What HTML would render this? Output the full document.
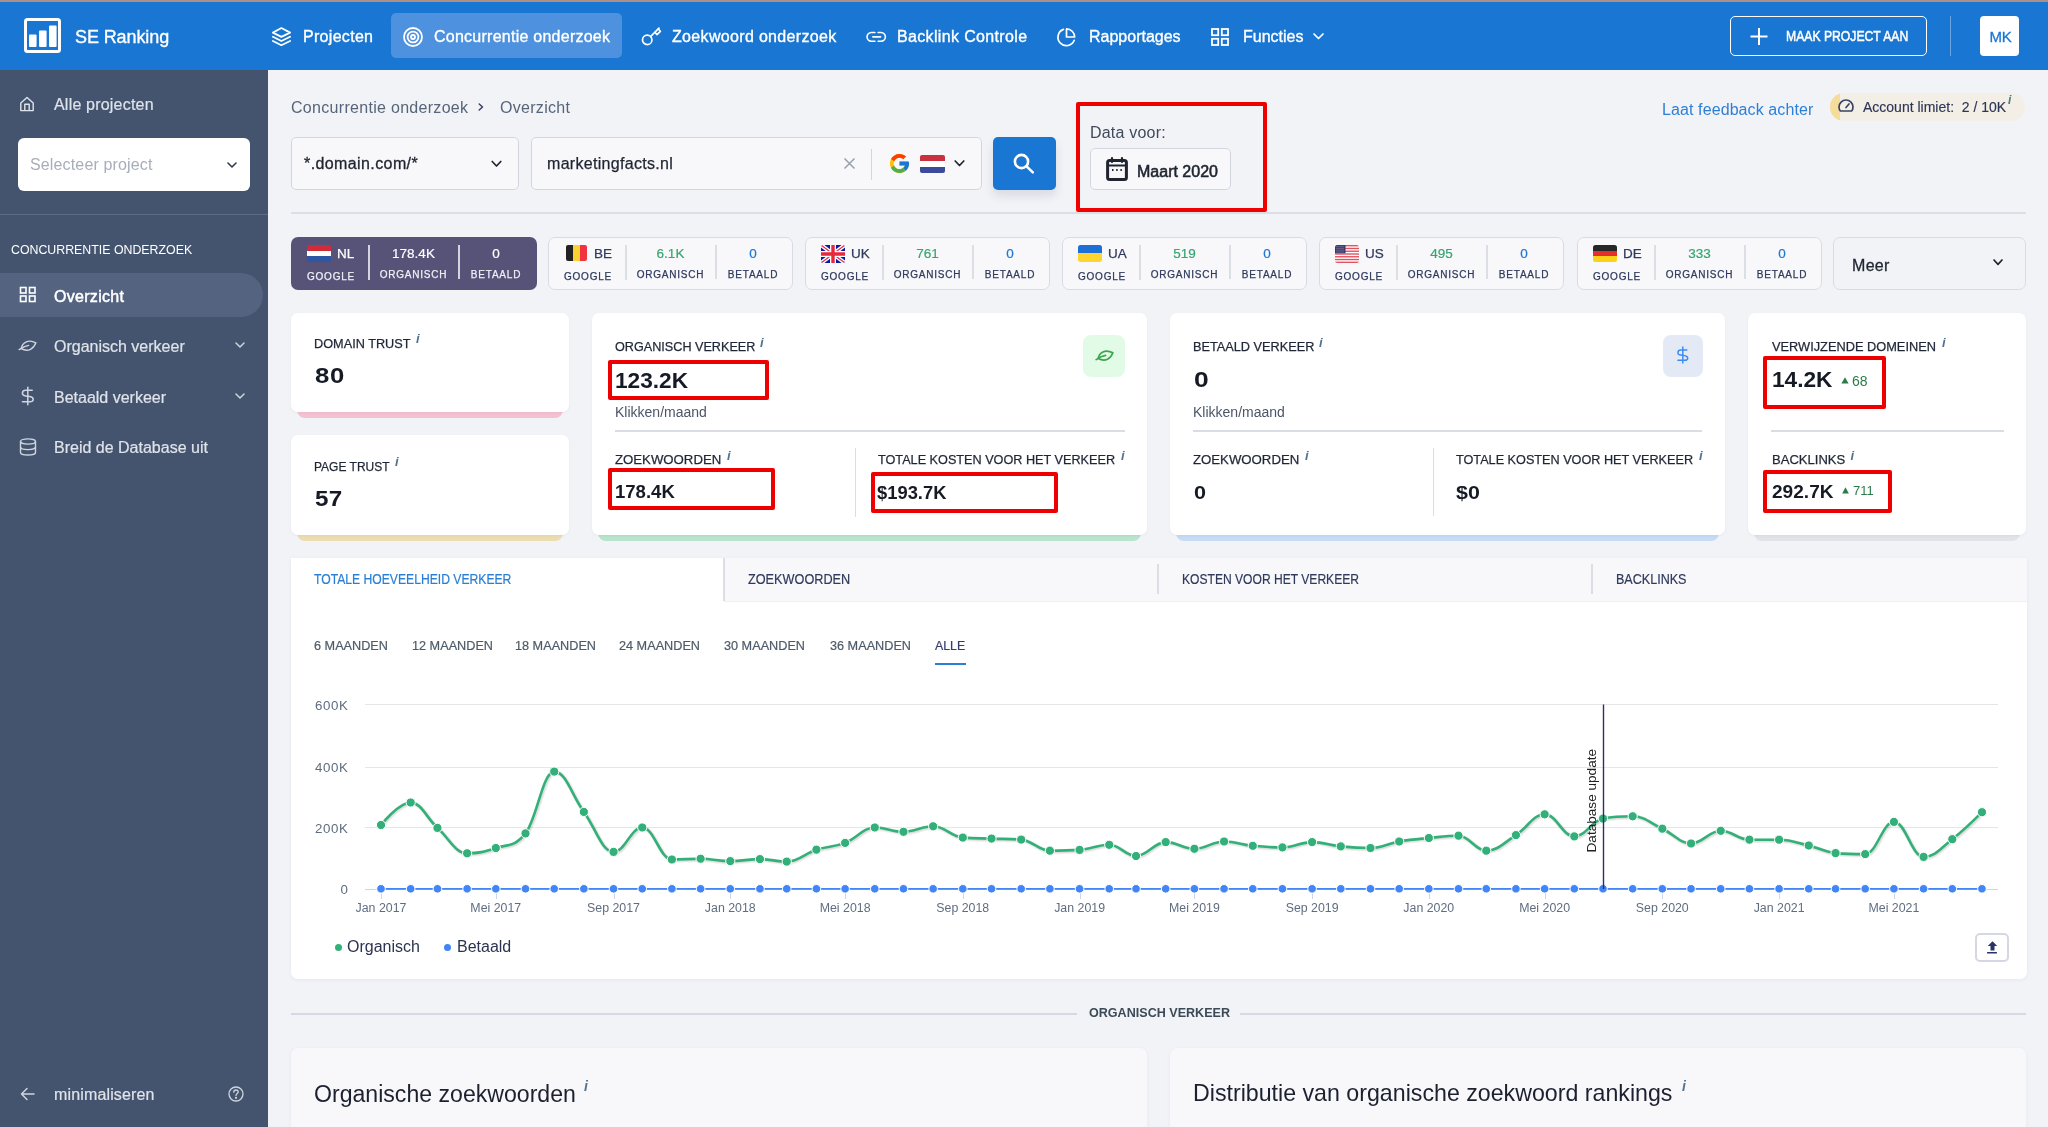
<!DOCTYPE html>
<html><head><meta charset="utf-8">
<style>
*{box-sizing:border-box;margin:0;padding:0}
html,body{width:2048px;height:1127px;overflow:hidden}
body{will-change:transform}
body{font-family:"Liberation Sans",sans-serif;background:#f2f3f7;position:relative;color:#1f2430}
.a{position:absolute}
.t{position:absolute;white-space:nowrap;line-height:1}
svg{position:absolute;overflow:visible}
/* top bar */
#topline{left:0;top:0;width:2048px;height:2px;background:#ae8f86;z-index:5}
#top{left:0;top:1px;width:2048px;height:69px;background:#1976d3}
.nav{color:#fff;font-size:16.4px;-webkit-text-stroke:0.35px #fff}
/* sidebar */
#side{left:0;top:70px;width:268px;height:1057px;background:#44546f}
.sd{color:#dfe3ea;font-size:16px;-webkit-text-stroke:0.2px #dfe3ea}
/* main */
.card{position:absolute;background:#fff;border-radius:6px}
</style></head>
<body>
<div id="topline" class="a"></div>
<div id="top" class="a">
  <!-- logo -->
  <svg style="left:24px;top:17px" width="38" height="36" viewBox="0 0 38 36">
    <rect x="1.5" y="1.5" width="34" height="32" rx="2" fill="none" stroke="#fff" stroke-width="3"/>
    <rect x="5" y="16.5" width="7.6" height="12.5" rx="1" fill="#fff"/>
    <rect x="15" y="12.5" width="7.6" height="16.5" rx="1" fill="#fff"/>
    <rect x="25" y="7.5" width="7.6" height="21.5" rx="1" fill="#fff"/>
  </svg>

  <div class="t nav" style="left:75px;top:27px;font-size:18px;font-weight:400;letter-spacing:-0.1px">SE Ranking</div>
  <!-- Projecten layers icon -->
  <svg style="left:271px;top:25px" width="22" height="22" viewBox="0 0 22 22" fill="none" stroke="#fff" stroke-width="1.8" stroke-linejoin="round" stroke-linecap="round">
    <path d="M10.4 2.05 L19.1 6.6 L10.4 10.9 L1.9 6.6 Z"/>
    <path d="M1.9 10.8 L10.4 15 L19.1 10.8"/>
    <path d="M1.9 15 L10.4 19.2 L19.1 15"/>
  </svg>
  <div class="t nav" style="left:303px;top:28px;font-size:16px;letter-spacing:0.3px">Projecten</div>
  <div class="a" style="left:391px;top:12px;width:231px;height:45px;background:#4e91de;border-radius:5px"></div>
  <svg style="left:402px;top:25px" width="22" height="22" viewBox="0 0 22 22" fill="none" stroke="#fff" stroke-width="1.8">
    <circle cx="11" cy="11" r="9"/><circle cx="11" cy="11" r="5.4"/><circle cx="11" cy="11" r="2"/>
  </svg>
  <div class="t nav" style="left:434px;top:28px;font-size:16px;letter-spacing:0.25px">Concurrentie onderzoek</div>
  <!-- key -->
  <svg style="left:636px;top:20px" width="30" height="30" viewBox="0 0 30 30" fill="none" stroke="#fff" stroke-width="1.7" stroke-linecap="round" stroke-linejoin="round">
    <circle cx="11.2" cy="18.9" r="4.7"/>
    <path d="M14.6 15.5 L23 7.2"/><path d="M18.9 11.3 L21 13.6 L24.4 10.3 L22.3 8"/>
  </svg>
  <div class="t nav" style="left:672px;top:28px;font-size:16px;letter-spacing:0.33px">Zoekwoord onderzoek</div>
  <!-- link -->
  <svg style="left:864px;top:28px" width="24" height="16" viewBox="0 0 24 16" fill="none" stroke="#fff" stroke-width="1.6" stroke-linecap="round">
    <path d="M10.9 3.5 H7.35 A4.35 4.35 0 0 0 7.35 12.2 H10.9"/>
    <path d="M14.1 3.5 H17.05 A4.35 4.35 0 0 1 17.05 12.2 H14.1"/>
    <path d="M8.8 7.85 H16.6"/>
  </svg>
  <div class="t nav" style="left:897px;top:28px;font-size:16px;letter-spacing:0.35px">Backlink Controle</div>
  <!-- pie -->
  <svg style="left:1056px;top:26px" width="20" height="20" viewBox="0 0 20 20" fill="none" stroke="#fff" stroke-width="1.7" stroke-linejoin="round" stroke-linecap="round">
    <path d="M7.4 2.4 A8.4 8.4 0 1 0 18.2 13.3"/>
    <path d="M10.5 1.9 V10 H18.6 A8.1 8.1 0 0 0 10.5 1.9 Z"/>
  </svg>
  <div class="t nav" style="left:1089px;top:28px;font-size:16px">Rapportages</div>
  <!-- grid -->
  <svg style="left:1211px;top:26.5px" width="18" height="18" viewBox="0 0 18 18" fill="none" stroke="#fff" stroke-width="1.8">
    <rect x="1" y="1" width="6.2" height="6.2"/><rect x="10.8" y="1" width="6.2" height="6.2"/>
    <rect x="1" y="10.8" width="6.2" height="6.2"/><rect x="10.8" y="10.8" width="6.2" height="6.2"/>
  </svg>
  <div class="t nav" style="left:1243px;top:28px;font-size:16px">Functies</div>
  <svg style="left:1313px;top:32px" width="11" height="7" viewBox="0 0 11 7" fill="none" stroke="#fff" stroke-width="1.7" stroke-linecap="round" stroke-linejoin="round"><path d="M1 1 L5.5 5.5 L10 1"/></svg>
  <!-- button -->
  <div class="a" style="left:1730px;top:15px;width:197px;height:40px;border:1.5px solid #fff;border-radius:5px"></div>
  <svg style="left:1750px;top:27px" width="18" height="17" viewBox="0 0 18 17" stroke="#fff" stroke-width="2"><path d="M9 0 V17 M0.5 8.5 H17.5"/></svg>
  <div class="t nav" style="left:1786px;top:28px;font-size:14.5px;font-weight:400;-webkit-text-stroke:0.5px #fff;transform:scaleX(0.84);transform-origin:0 0;letter-spacing:0px">MAAK PROJECT AAN</div>
  <div class="a" style="left:1950px;top:15px;width:1px;height:40px;background:rgba(255,255,255,0.35)"></div>
  <div class="a" style="left:1980px;top:15px;width:39px;height:40px;background:#fff;border-radius:4px"></div>
  <div class="t" style="left:1989.5px;top:27.5px;font-size:15px;color:#1976d3;letter-spacing:-0.3px;-webkit-text-stroke:0.3px #1976d3">MK</div>
</div>

<div id="side" class="a">
  <svg style="left:19px;top:26px" width="16" height="16" viewBox="0 0 16 16" fill="none" stroke="#dfe3ea" stroke-width="1.4" stroke-linejoin="round">
    <path d="M1.8 14.6 V7 L8 1.5 L14.2 7 V14.6 Z"/><path d="M5.8 14.6 V8.2 H10.2 V14.6"/>
  </svg>
  <div class="t sd" style="left:54px;top:27px;letter-spacing:0.2px">Alle projecten</div>
  <div class="a" style="left:18px;top:68px;width:232px;height:53px;background:#fff;border-radius:6px"></div>
  <div class="t" style="left:30px;top:87px;font-size:16px;color:#a7adb9;letter-spacing:0.15px">Selecteer project</div>
  <svg style="left:227px;top:92px" width="10" height="7" viewBox="0 0 10 7" fill="none" stroke="#2f3a4c" stroke-width="1.6" stroke-linecap="round" stroke-linejoin="round"><path d="M1 1 L5 5 L9 1"/></svg>
  <div class="a" style="left:0;top:144px;width:268px;height:1px;background:#5e6d86"></div>
  <div class="t" style="left:11px;top:173px;font-size:13px;color:#fff;transform:scaleX(0.95);transform-origin:0 0">CONCURRENTIE ONDERZOEK</div>
  <div class="a" style="left:0;top:203px;width:263px;height:44px;background:#536380;border-radius:0 22px 22px 0"></div>
  <svg style="left:19px;top:216px" width="18" height="17" viewBox="0 0 18 17" fill="none" stroke="#fff" stroke-width="1.6">
    <rect x="1.5" y="1.5" width="5.5" height="5.5"/><rect x="10.5" y="1.5" width="5.5" height="5.5"/>
    <rect x="1.5" y="10" width="5.5" height="5.5"/><rect x="10.5" y="10" width="5.5" height="5.5"/>
  </svg>
  <div class="t" style="left:54px;top:219px;font-size:16px;color:#fff;font-weight:400;-webkit-text-stroke:0.5px #fff;letter-spacing:0.3px">Overzicht</div>
  <svg style="left:14px;top:264px" width="28" height="22" viewBox="0 0 28 22" fill="none" stroke="#cfd5de" stroke-width="1.4" stroke-linecap="round" stroke-linejoin="round">
    <path d="M7.2 14.6 C8.2 8.8 13.8 4.8 21.9 8.8 C19.8 14.3 14.6 18.6 7.2 14.6 Z"/><path d="M5.1 15.6 C8 13.6 11 12 14.6 11.4"/>
  </svg>
  <div class="t sd" style="left:54px;top:269px">Organisch verkeer</div>
  <svg style="left:235px;top:272px" width="10" height="7" viewBox="0 0 10 7" fill="none" stroke="#cfd5de" stroke-width="1.5" stroke-linecap="round" stroke-linejoin="round"><path d="M1 1 L5 5 L9 1"/></svg>
  <svg style="left:14px;top:316px" width="28" height="22" viewBox="0 0 28 22" fill="none" stroke="#cfd5de" stroke-width="1.5" stroke-linecap="round">
    <path d="M18.2 4.3 H11.6 C9.6 4.3 8.4 5.7 8.4 7.3 C8.4 9 9.6 9.7 11.6 10 L15.8 10.6 C17.9 10.9 19.2 12 19.2 13.4 C19.2 15 17.8 15.7 15.8 15.7 H8.4"/><path d="M13.8 1.2 V18.8"/>
  </svg>
  <div class="t sd" style="left:54px;top:320px">Betaald verkeer</div>
  <svg style="left:235px;top:323px" width="10" height="7" viewBox="0 0 10 7" fill="none" stroke="#cfd5de" stroke-width="1.5" stroke-linecap="round" stroke-linejoin="round"><path d="M1 1 L5 5 L9 1"/></svg>
  <svg style="left:19px;top:368px" width="18" height="18" viewBox="0 0 18 18" fill="none" stroke="#cfd5de" stroke-width="1.4">
    <ellipse cx="9" cy="3.5" rx="7.5" ry="2.6"/><path d="M1.5 3.5 V14.5 C1.5 16 5 17 9 17 C13 17 16.5 16 16.5 14.5 V3.5"/><path d="M1.5 9 C1.5 10.5 5 11.6 9 11.6 C13 11.6 16.5 10.5 16.5 9"/>
  </svg>
  <div class="t sd" style="left:54px;top:370px">Breid de Database uit</div>
  <svg style="left:20px;top:1017px" width="15" height="14" viewBox="0 0 15 14" fill="none" stroke="#cfd5de" stroke-width="1.5" stroke-linecap="round" stroke-linejoin="round"><path d="M14 7 H1.5 M7 1.5 L1.5 7 L7 12.5"/></svg>
  <div class="t sd" style="left:54px;top:1017px;letter-spacing:0.15px">minimaliseren</div>
  <svg style="left:228px;top:1016px" width="16" height="16" viewBox="0 0 16 16" fill="none" stroke="#cfd5de" stroke-width="1.3"><circle cx="8" cy="8" r="7"/><path d="M5.8 6.2 C5.8 4.8 6.8 4 8 4 C9.3 4 10.2 4.8 10.2 6 C10.2 7.6 8 7.6 8 9.6" stroke-linecap="round"/><circle cx="8" cy="11.8" r="0.5" fill="#cfd5de"/></svg>
</div>

<!-- MAIN -->
<div class="t" style="left:291px;top:100px;font-size:16px;color:#56657a;letter-spacing:0.3px">Concurrentie onderzoek</div>
<svg style="left:478px;top:102.5px" width="6" height="8" viewBox="0 0 6 8" fill="none" stroke="#3a3f6e" stroke-width="1.5" stroke-linecap="round" stroke-linejoin="round"><path d="M1.2 1 L4.5 4 L1.2 7"/></svg>
<div class="t" style="left:500px;top:100px;font-size:16px;color:#56657a;letter-spacing:0.3px">Overzicht</div>

<div class="a" style="left:291px;top:137px;width:228px;height:53px;background:#f8f8fb;border:1px solid #d3d6de;border-radius:5px"></div>
<div class="t" style="left:304px;top:156px;font-size:16px;color:#1f2430;letter-spacing:0.4px;-webkit-text-stroke:0.3px #1f2430">*.domain.com/*</div>
<svg style="left:491px;top:160px" width="11" height="8" viewBox="0 0 11 8" fill="none" stroke="#1f2430" stroke-width="1.7" stroke-linecap="round" stroke-linejoin="round"><path d="M1.2 1.5 L5.5 6 L9.8 1.5"/></svg>

<div class="a" style="left:531px;top:137px;width:451px;height:53px;background:#f8f8fb;border:1px solid #d3d6de;border-radius:5px"></div>
<div class="t" style="left:547px;top:156px;font-size:16px;color:#1f2430;letter-spacing:0.3px;-webkit-text-stroke:0.25px #1f2430">marketingfacts.nl</div>
<svg style="left:843px;top:158px" width="13" height="11" viewBox="0 0 13 11" fill="none" stroke="#9aa0ab" stroke-width="1.5"><path d="M1.5 0.5 L11.5 10.5 M11.5 0.5 L1.5 10.5"/></svg>
<div class="a" style="left:871px;top:149px;width:1px;height:31px;background:#d3d6de"></div>
<svg style="left:888px;top:152px" width="23" height="23" viewBox="0 0 48 48">
 <path fill="#FFC107" d="M43.6 20.1H42V20H24v8h11.3C33.7 32.7 29.2 36 24 36c-6.6 0-12-5.4-12-12s5.4-12 12-12c3.1 0 5.8 1.2 7.9 3.1l5.7-5.7C34 6.1 29.3 4 24 4 13 4 4 13 4 24s9 20 20 20 20-9 20-20c0-1.3-.1-2.6-.4-3.9z"/>
 <path fill="#FF3D00" d="M6.3 14.7l6.6 4.8C14.7 15.1 19 12 24 12c3.1 0 5.8 1.2 7.9 3.1l5.7-5.7C34 6.1 29.3 4 24 4 16.3 4 9.7 8.3 6.3 14.7z"/>
 <path fill="#4CAF50" d="M24 44c5.2 0 9.9-2 13.4-5.2l-6.2-5.2C29.2 35.1 26.7 36 24 36c-5.2 0-9.6-3.3-11.3-7.9l-6.5 5C9.5 39.6 16.2 44 24 44z"/>
 <path fill="#1976D2" d="M43.6 20.1H42V20H24v8h11.3c-.8 2.2-2.2 4.2-4.1 5.6l6.2 5.2C37 39.2 44 34 44 24c0-1.3-.1-2.6-.4-3.9z"/>
</svg>
<div class="a" style="left:920px;top:155px;width:25px;height:18px;border-radius:2px;overflow:hidden;background:linear-gradient(#c8313e 0 33.3%,#fff 33.3% 66.6%,#3b4b9b 66.6%)"></div>
<svg style="left:954px;top:160px" width="11" height="7" viewBox="0 0 11 7" fill="none" stroke="#1f2430" stroke-width="1.7" stroke-linecap="round" stroke-linejoin="round"><path d="M1.2 1 L5.5 5.5 L9.8 1"/></svg>

<div class="a" style="left:993px;top:137px;width:63px;height:53px;background:#1976d3;border-radius:5px;box-shadow:0 6px 10px rgba(30,50,90,0.12)"></div>
<svg style="left:1013px;top:153px" width="23" height="21" viewBox="0 0 23 21" fill="none" stroke="#fff" stroke-width="2.6" stroke-linecap="round"><circle cx="8.5" cy="8.5" r="6.6"/><path d="M13.6 13.4 L19.8 19.4"/></svg>

<div class="a" style="left:1076px;top:102px;width:191px;height:110px;border:4px solid #ee0000;border-radius:2px"></div>
<div class="t" style="left:1090px;top:124.5px;font-size:16px;color:#404a5c;letter-spacing:0.2px">Data voor:</div>
<div class="a" style="left:1090px;top:148px;width:141px;height:42px;background:#f8f8fb;border:1px solid #d3d6de;border-radius:5px"></div>
<svg style="left:1106px;top:157px" width="22" height="24" viewBox="0 0 22 24" fill="none" stroke="#1f2430">
 <rect x="1.6" y="3.6" width="18.8" height="18.8" rx="2" stroke-width="3"/>
 <path d="M1.6 8.5 H20.4" stroke-width="2"/>
 <path d="M6 1 V5 M16 1 V5" stroke-width="2.2" stroke-linecap="round"/>
 <path d="M6 13 H7.5 M10.2 13 H11.7 M14.4 13 H15.9" stroke-width="1.8"/>
</svg>
<div class="t" style="left:1137px;top:163.5px;font-size:16px;color:#1f2430;font-weight:400;-webkit-text-stroke:0.55px #1f2430;letter-spacing:0px">Maart 2020</div>

<div class="t" style="left:1662px;top:101.5px;font-size:16px;color:#2d7fd6;letter-spacing:0.1px">Laat feedback achter</div>
<div class="a" style="left:1830px;top:93px;width:195px;height:28px;background:#f4efe6;border-radius:14px;overflow:hidden"><div class="a" style="left:0;top:0;width:10px;height:28px;background:#f6dc9b"></div></div>
<svg style="left:1838px;top:98px" width="16" height="15" viewBox="0 0 16 15" fill="none" stroke="#3a4462" stroke-width="1.7" stroke-linecap="round"><path d="M2.4 13 H13.6 C14.6 11.9 15 10.4 15 9 A7 7 0 0 0 1 9 C1 10.4 1.4 11.9 2.4 13 Z"/><path d="M8 9.5 L11 6"/></svg>
<div class="t" style="left:1863px;top:100px;font-size:14px;color:#2d3659;-webkit-text-stroke:0.15px #2d3659;transform:scaleX(1.0);transform-origin:0 0">Account limiet:&nbsp; 2 / 10K</div>
<div class="t" style="left:2008px;top:94px;font-size:12px;font-weight:700;color:#4f7a8f;font-style:italic">i</div>

<div class="a" style="left:291px;top:212px;width:1735px;height:2px;background:#dcdee6"></div>

<div class="a" style="left:291px;top:237px;width:246px;height:53px;background:#575278;border-radius:7px"></div>
<div class="a" style="left:307px;top:245px;width:24px;height:17px;border-radius:2.5px;overflow:hidden;background:linear-gradient(#cf2b38 0 34%,#fff 34% 66%,#2d56a3 66%)"></div>
<div class="t" style="left:337px;top:246.5px;font-size:13.5px;color:#fff;-webkit-text-stroke:0.25px #fff">NL</div>
<div class="t" style="left:306px;width:50px;text-align:center;top:271.5px;font-size:10px;letter-spacing:0.8px;color:#f0eff5;-webkit-text-stroke:0.25px #f0eff5">GOOGLE</div>
<div class="a" style="left:368px;top:245px;width:1.5px;height:35px;background:rgba(255,255,255,0.75)"></div>
<div class="t" style="left:373.5px;width:80px;text-align:center;top:246.5px;font-size:13.5px;color:#fff;-webkit-text-stroke:0.2px #fff">178.4K</div>
<div class="t" style="left:373.5px;width:80px;text-align:center;top:270px;font-size:10px;letter-spacing:0.75px;color:#f0eff5;-webkit-text-stroke:0.25px #f0eff5">ORGANISCH</div>
<div class="a" style="left:458px;top:245px;width:1.5px;height:34px;background:rgba(255,255,255,0.75)"></div>
<div class="t" style="left:456px;width:80px;text-align:center;top:246.5px;font-size:13.5px;color:#fff;-webkit-text-stroke:0.2px #fff">0</div>
<div class="t" style="left:456px;width:80px;text-align:center;top:270px;font-size:10px;letter-spacing:0.8px;color:#f0eff5;-webkit-text-stroke:0.25px #f0eff5">BETAALD</div>
<div class="a" style="left:548px;top:237px;width:245px;height:53px;background:#f8f8fb;border:1.5px solid #d9dbe4;border-radius:7px"></div>
<div class="a" style="left:566px;top:245px;width:21px;height:16px;border-radius:2px;overflow:hidden;background:linear-gradient(90deg,#222 0 33.3%,#fbd033 33.3% 66.6%,#f0333f 66.6%)"></div>
<div class="t" style="left:594px;top:246.5px;font-size:13.5px;color:#2f3a5c;-webkit-text-stroke:0.25px #2f3a5c">BE</div>
<div class="t" style="left:563px;width:50px;text-align:center;top:271.5px;font-size:10px;letter-spacing:0.8px;color:#2f3a5c;-webkit-text-stroke:0.25px #2f3a5c">GOOGLE</div>
<div class="a" style="left:625px;top:245px;width:1.5px;height:35px;background:#dcdee6"></div>
<div class="t" style="left:630.5px;width:80px;text-align:center;top:246.5px;font-size:13.5px;color:#35a66f;-webkit-text-stroke:0.2px #35a66f">6.1K</div>
<div class="t" style="left:630.5px;width:80px;text-align:center;top:270px;font-size:10px;letter-spacing:0.75px;color:#2f3a5c;-webkit-text-stroke:0.25px #2f3a5c">ORGANISCH</div>
<div class="a" style="left:715px;top:245px;width:1.5px;height:34px;background:#dcdee6"></div>
<div class="t" style="left:713px;width:80px;text-align:center;top:246.5px;font-size:13.5px;color:#1f78d1;-webkit-text-stroke:0.2px #1f78d1">0</div>
<div class="t" style="left:713px;width:80px;text-align:center;top:270px;font-size:10px;letter-spacing:0.8px;color:#2f3a5c;-webkit-text-stroke:0.25px #2f3a5c">BETAALD</div>
<div class="a" style="left:805px;top:237px;width:245px;height:53px;background:#f8f8fb;border:1.5px solid #d9dbe4;border-radius:7px"></div>
<svg style="left:821px;top:245px" width="24" height="18" viewBox="0 0 24 18"><defs><clipPath id="ukc"><rect width="24" height="18" rx="2.5"/></clipPath></defs><g clip-path="url(#ukc)"><rect width="24" height="18" fill="#0a17a7"/><path d="M0 0 L24 18 M24 0 L0 18" stroke="#fff" stroke-width="4"/><path d="M0 0 L24 18 M24 0 L0 18" stroke="#e6273e" stroke-width="1.2"/><path d="M12 0 V18 M0 9 H24" stroke="#fff" stroke-width="6"/><path d="M12 0 V18 M0 9 H24" stroke="#e6273e" stroke-width="3.4"/></g></svg>
<div class="t" style="left:851px;top:246.5px;font-size:13.5px;color:#2f3a5c;-webkit-text-stroke:0.25px #2f3a5c">UK</div>
<div class="t" style="left:820px;width:50px;text-align:center;top:271.5px;font-size:10px;letter-spacing:0.8px;color:#2f3a5c;-webkit-text-stroke:0.25px #2f3a5c">GOOGLE</div>
<div class="a" style="left:882px;top:245px;width:1.5px;height:35px;background:#dcdee6"></div>
<div class="t" style="left:887.5px;width:80px;text-align:center;top:246.5px;font-size:13.5px;color:#35a66f;-webkit-text-stroke:0.2px #35a66f">761</div>
<div class="t" style="left:887.5px;width:80px;text-align:center;top:270px;font-size:10px;letter-spacing:0.75px;color:#2f3a5c;-webkit-text-stroke:0.25px #2f3a5c">ORGANISCH</div>
<div class="a" style="left:972px;top:245px;width:1.5px;height:34px;background:#dcdee6"></div>
<div class="t" style="left:970px;width:80px;text-align:center;top:246.5px;font-size:13.5px;color:#1f78d1;-webkit-text-stroke:0.2px #1f78d1">0</div>
<div class="t" style="left:970px;width:80px;text-align:center;top:270px;font-size:10px;letter-spacing:0.8px;color:#2f3a5c;-webkit-text-stroke:0.25px #2f3a5c">BETAALD</div>
<div class="a" style="left:1062px;top:237px;width:245px;height:53px;background:#f8f8fb;border:1.5px solid #d9dbe4;border-radius:7px"></div>
<div class="a" style="left:1078px;top:245px;width:24px;height:17px;border-radius:2.5px;overflow:hidden;background:linear-gradient(#1d6fd6 0 50%,#fed530 50%)"></div>
<div class="t" style="left:1108px;top:246.5px;font-size:13.5px;color:#2f3a5c;-webkit-text-stroke:0.25px #2f3a5c">UA</div>
<div class="t" style="left:1077px;width:50px;text-align:center;top:271.5px;font-size:10px;letter-spacing:0.8px;color:#2f3a5c;-webkit-text-stroke:0.25px #2f3a5c">GOOGLE</div>
<div class="a" style="left:1139px;top:245px;width:1.5px;height:35px;background:#dcdee6"></div>
<div class="t" style="left:1144.5px;width:80px;text-align:center;top:246.5px;font-size:13.5px;color:#35a66f;-webkit-text-stroke:0.2px #35a66f">519</div>
<div class="t" style="left:1144.5px;width:80px;text-align:center;top:270px;font-size:10px;letter-spacing:0.75px;color:#2f3a5c;-webkit-text-stroke:0.25px #2f3a5c">ORGANISCH</div>
<div class="a" style="left:1229px;top:245px;width:1.5px;height:34px;background:#dcdee6"></div>
<div class="t" style="left:1227px;width:80px;text-align:center;top:246.5px;font-size:13.5px;color:#1f78d1;-webkit-text-stroke:0.2px #1f78d1">0</div>
<div class="t" style="left:1227px;width:80px;text-align:center;top:270px;font-size:10px;letter-spacing:0.8px;color:#2f3a5c;-webkit-text-stroke:0.25px #2f3a5c">BETAALD</div>
<div class="a" style="left:1319px;top:237px;width:245px;height:53px;background:#f8f8fb;border:1.5px solid #d9dbe4;border-radius:7px"></div>
<svg style="left:1335px;top:245px" width="24" height="18" viewBox="0 0 24 18"><defs><clipPath id="usc"><rect width="24" height="18" rx="2.5"/></clipPath></defs><g clip-path="url(#usc)"><rect width="24" height="18" fill="#fff"/><rect y="0.00" width="24" height="1.38" fill="#e0525f"/><rect y="2.77" width="24" height="1.38" fill="#e0525f"/><rect y="5.54" width="24" height="1.38" fill="#e0525f"/><rect y="8.31" width="24" height="1.38" fill="#e0525f"/><rect y="11.08" width="24" height="1.38" fill="#e0525f"/><rect y="13.85" width="24" height="1.38" fill="#e0525f"/><rect y="16.62" width="24" height="1.38" fill="#e0525f"/><rect width="10.5" height="8.3" fill="#3c3b6e"/><path d="M1.5 1.6h7.5M1.5 3.4h7.5M1.5 5.2h7.5M1.5 7h7.5" stroke="#aab" stroke-width="0.7" stroke-dasharray="1 1"/></g></svg>
<div class="t" style="left:1365px;top:246.5px;font-size:13.5px;color:#2f3a5c;-webkit-text-stroke:0.25px #2f3a5c">US</div>
<div class="t" style="left:1334px;width:50px;text-align:center;top:271.5px;font-size:10px;letter-spacing:0.8px;color:#2f3a5c;-webkit-text-stroke:0.25px #2f3a5c">GOOGLE</div>
<div class="a" style="left:1396px;top:245px;width:1.5px;height:35px;background:#dcdee6"></div>
<div class="t" style="left:1401.5px;width:80px;text-align:center;top:246.5px;font-size:13.5px;color:#35a66f;-webkit-text-stroke:0.2px #35a66f">495</div>
<div class="t" style="left:1401.5px;width:80px;text-align:center;top:270px;font-size:10px;letter-spacing:0.75px;color:#2f3a5c;-webkit-text-stroke:0.25px #2f3a5c">ORGANISCH</div>
<div class="a" style="left:1486px;top:245px;width:1.5px;height:34px;background:#dcdee6"></div>
<div class="t" style="left:1484px;width:80px;text-align:center;top:246.5px;font-size:13.5px;color:#1f78d1;-webkit-text-stroke:0.2px #1f78d1">0</div>
<div class="t" style="left:1484px;width:80px;text-align:center;top:270px;font-size:10px;letter-spacing:0.8px;color:#2f3a5c;-webkit-text-stroke:0.25px #2f3a5c">BETAALD</div>
<div class="a" style="left:1577px;top:237px;width:245px;height:53px;background:#f8f8fb;border:1.5px solid #d9dbe4;border-radius:7px"></div>
<div class="a" style="left:1593px;top:245px;width:24px;height:17px;border-radius:2.5px;overflow:hidden;background:linear-gradient(#272727 0 33.3%,#e42f2f 33.3% 66.6%,#fcd118 66.6%)"></div>
<div class="t" style="left:1623px;top:246.5px;font-size:13.5px;color:#2f3a5c;-webkit-text-stroke:0.25px #2f3a5c">DE</div>
<div class="t" style="left:1592px;width:50px;text-align:center;top:271.5px;font-size:10px;letter-spacing:0.8px;color:#2f3a5c;-webkit-text-stroke:0.25px #2f3a5c">GOOGLE</div>
<div class="a" style="left:1654px;top:245px;width:1.5px;height:35px;background:#dcdee6"></div>
<div class="t" style="left:1659.5px;width:80px;text-align:center;top:246.5px;font-size:13.5px;color:#35a66f;-webkit-text-stroke:0.2px #35a66f">333</div>
<div class="t" style="left:1659.5px;width:80px;text-align:center;top:270px;font-size:10px;letter-spacing:0.75px;color:#2f3a5c;-webkit-text-stroke:0.25px #2f3a5c">ORGANISCH</div>
<div class="a" style="left:1744px;top:245px;width:1.5px;height:34px;background:#dcdee6"></div>
<div class="t" style="left:1742px;width:80px;text-align:center;top:246.5px;font-size:13.5px;color:#1f78d1;-webkit-text-stroke:0.2px #1f78d1">0</div>
<div class="t" style="left:1742px;width:80px;text-align:center;top:270px;font-size:10px;letter-spacing:0.8px;color:#2f3a5c;-webkit-text-stroke:0.25px #2f3a5c">BETAALD</div>
<div class="a" style="left:1833px;top:237px;width:193px;height:53px;border:1.5px solid #d9dbe4;border-radius:7px"></div>
<div class="t" style="left:1852px;top:257.5px;font-size:16px;color:#1f2430;letter-spacing:0.3px;-webkit-text-stroke:0.3px #1f2430">Meer</div>
<svg style="left:1993px;top:259px" width="10" height="7" viewBox="0 0 10 7" fill="none" stroke="#1f2430" stroke-width="1.7" stroke-linecap="round" stroke-linejoin="round"><path d="M1 1 L5 5.3 L9 1"/></svg><div class="a" style="left:297px;top:402px;width:266px;height:16px;background:#f4c1d1;border-radius:0 0 8px 8px"></div>
<div class="a" style="left:291px;top:313px;width:278px;height:99px;background:#fff;border-radius:7px;box-shadow:0 1px 3px rgba(40,50,80,0.05)"></div>
<div class="t" style="left:314px;top:337.1px;font-size:13.2px;color:#1f2636;-webkit-text-stroke:0.25px #1f2636;transform:scaleX(0.964);transform-origin:0 0">DOMAIN TRUST</div>
<div class="t" style="left:416px;top:332px;font-size:13px;font-weight:700;color:#52738f;font-style:italic">i</div>
<div class="t" style="left:314.5px;top:364.8px;font-size:22px;font-weight:700;color:#151a24;letter-spacing:0.6px;transform:scaleX(1.17);transform-origin:0 0">80</div>
<div class="a" style="left:297px;top:525px;width:266px;height:16px;background:#ecdcb0;border-radius:0 0 8px 8px"></div>
<div class="a" style="left:291px;top:435px;width:278px;height:100px;background:#fff;border-radius:7px;box-shadow:0 1px 3px rgba(40,50,80,0.05)"></div>
<div class="t" style="left:314px;top:460px;font-size:13.2px;color:#1f2636;-webkit-text-stroke:0.25px #1f2636;transform:scaleX(0.91);transform-origin:0 0">PAGE TRUST</div>
<div class="t" style="left:395px;top:455px;font-size:13px;font-weight:700;color:#52738f;font-style:italic">i</div>
<div class="t" style="left:314.5px;top:487.7px;font-size:22px;font-weight:700;color:#151a24;letter-spacing:0.2px;transform:scaleX(1.1);transform-origin:0 0">57</div>
<div class="a" style="left:598px;top:525px;width:543px;height:16px;background:#b8e3cc;border-radius:0 0 8px 8px"></div>
<div class="a" style="left:592px;top:313px;width:555px;height:222px;background:#fff;border-radius:7px;box-shadow:0 1px 3px rgba(40,50,80,0.05)"></div>
<div class="t" style="left:615px;top:340.3px;font-size:13.2px;color:#1f2636;-webkit-text-stroke:0.25px #1f2636;transform:scaleX(0.958);transform-origin:0 0">ORGANISCH VERKEER</div>
<div class="t" style="left:760px;top:335.5px;font-size:13px;font-weight:700;color:#52738f;font-style:italic">i</div>
<div class="a" style="left:1083px;top:335px;width:42px;height:42px;background:#e2fbe6;border-radius:8px"></div>
<svg style="left:1090.5px;top:344px" width="28" height="22" viewBox="0 0 28 22" fill="none" stroke="#3ea54f" stroke-width="1.7" stroke-linecap="round" stroke-linejoin="round"><path d="M7.2 14.6 C8.2 8.8 13.8 4.8 21.9 8.8 C19.8 14.3 14.6 18.6 7.2 14.6 Z"/><path d="M5.1 15.6 C8 13.6 11 12 14.6 11.4"/></svg>
<div class="t" style="left:615px;top:369.7px;font-size:22px;font-weight:700;color:#151a24;letter-spacing:0px;transform:scaleX(1.03);transform-origin:0 0">123.2K</div>
<div class="t" style="left:615px;top:405px;font-size:14px;color:#4c5667">Klikken/maand</div>
<div class="a" style="left:615px;top:430px;width:510px;height:1.5px;background:#dadde6"></div>
<div class="t" style="left:615px;top:453.2px;font-size:13.2px;color:#1f2636;-webkit-text-stroke:0.25px #1f2636;transform:scaleX(1.0);transform-origin:0 0">ZOEKWOORDEN</div>
<div class="t" style="left:727px;top:448.5px;font-size:13px;font-weight:700;color:#52738f;font-style:italic">i</div>
<div class="t" style="left:615px;top:483px;font-size:18px;font-weight:700;color:#151a24;letter-spacing:0px;transform:scaleX(1.03);transform-origin:0 0">178.4K</div>
<div class="a" style="left:855px;top:448px;width:1px;height:69px;background:#dadde6"></div>
<div class="t" style="left:878px;top:453.2px;font-size:13.2px;color:#1f2636;-webkit-text-stroke:0.25px #1f2636;transform:scaleX(0.96);transform-origin:0 0">TOTALE KOSTEN VOOR HET VERKEER</div>
<div class="t" style="left:1121px;top:448.5px;font-size:13px;font-weight:700;color:#52738f;font-style:italic">i</div>
<div class="t" style="left:877px;top:483.5px;font-size:18px;font-weight:700;color:#151a24;letter-spacing:0px;transform:scaleX(1.02);transform-origin:0 0">$193.7K</div>
<div class="a" style="left:608px;top:360px;width:161px;height:40px;border:4px solid #ee0000;border-radius:2px"></div>
<div class="a" style="left:608px;top:468px;width:167px;height:42px;border:4px solid #ee0000;border-radius:2px"></div>
<div class="a" style="left:871px;top:472px;width:187px;height:41px;border:4px solid #ee0000;border-radius:2px"></div>
<div class="a" style="left:1176px;top:525px;width:543px;height:16px;background:#c6dbf4;border-radius:0 0 8px 8px"></div>
<div class="a" style="left:1170px;top:313px;width:555px;height:222px;background:#fff;border-radius:7px;box-shadow:0 1px 3px rgba(40,50,80,0.05)"></div>
<div class="t" style="left:1193px;top:340.3px;font-size:13.2px;color:#1f2636;-webkit-text-stroke:0.25px #1f2636;transform:scaleX(0.965);transform-origin:0 0">BETAALD VERKEER</div>
<div class="t" style="left:1319px;top:335.5px;font-size:13px;font-weight:700;color:#52738f;font-style:italic">i</div>
<div class="a" style="left:1663px;top:335px;width:40px;height:42px;background:#e3eaf6;border-radius:8px"></div>
<svg style="left:1669.6px;top:345.9px" width="26" height="20" viewBox="0 0 28 22" fill="none" stroke="#3b8cf0" stroke-width="1.6" stroke-linecap="round"><path d="M18.2 4.3 H11.6 C9.6 4.3 8.4 5.7 8.4 7.3 C8.4 9 9.6 9.7 11.6 10 L15.8 10.6 C17.9 10.9 19.2 12 19.2 13.4 C19.2 15 17.8 15.7 15.8 15.7 H8.4"/><path d="M13.8 1.2 V18.8"/></svg>
<div class="t" style="left:1193.5px;top:369.1px;font-size:22px;font-weight:700;color:#151a24;letter-spacing:0px;transform:scaleX(1.2);transform-origin:0 0">0</div>
<div class="t" style="left:1193px;top:405px;font-size:14px;color:#4c5667">Klikken/maand</div>
<div class="a" style="left:1193px;top:430px;width:509px;height:1.5px;background:#dadde6"></div>
<div class="t" style="left:1193px;top:453.2px;font-size:13.2px;color:#1f2636;-webkit-text-stroke:0.25px #1f2636;transform:scaleX(1.0);transform-origin:0 0">ZOEKWOORDEN</div>
<div class="t" style="left:1305px;top:448.5px;font-size:13px;font-weight:700;color:#52738f;font-style:italic">i</div>
<div class="t" style="left:1193.5px;top:483.6px;font-size:18px;font-weight:700;color:#151a24;letter-spacing:0px;transform:scaleX(1.2);transform-origin:0 0">0</div>
<div class="a" style="left:1433px;top:448px;width:1px;height:68px;background:#dadde6"></div>
<div class="t" style="left:1456px;top:453.2px;font-size:13.2px;color:#1f2636;-webkit-text-stroke:0.25px #1f2636;transform:scaleX(0.96);transform-origin:0 0">TOTALE KOSTEN VOOR HET VERKEER</div>
<div class="t" style="left:1699px;top:448.5px;font-size:13px;font-weight:700;color:#52738f;font-style:italic">i</div>
<div class="t" style="left:1456px;top:483.5px;font-size:18px;font-weight:700;color:#151a24;letter-spacing:0px;transform:scaleX(1.19);transform-origin:0 0">$0</div>
<div class="a" style="left:1754px;top:525px;width:266px;height:16px;background:#e2e3e8;border-radius:0 0 8px 8px"></div>
<div class="a" style="left:1748px;top:313px;width:278px;height:222px;background:#fff;border-radius:7px;box-shadow:0 1px 3px rgba(40,50,80,0.05)"></div>
<div class="t" style="left:1772px;top:340.3px;font-size:13.2px;color:#1f2636;-webkit-text-stroke:0.25px #1f2636;transform:scaleX(0.97);transform-origin:0 0">VERWIJZENDE DOMEINEN</div>
<div class="t" style="left:1942px;top:335.5px;font-size:13px;font-weight:700;color:#52738f;font-style:italic">i</div>
<div class="t" style="left:1772px;top:369.1px;font-size:22px;font-weight:700;color:#151a24;letter-spacing:0px;transform:scaleX(1.03);transform-origin:0 0">14.2K</div>
<svg style="left:1841px;top:377px" width="8" height="7" viewBox="0 0 8 7"><path d="M4 0.3 L7.6 6.5 H0.4 Z" fill="#2a7d4a"/></svg>
<div class="t" style="left:1852px;top:373.5px;font-size:14px;color:#2a7d4a">68</div>
<div class="a" style="left:1771px;top:430px;width:233px;height:1.5px;background:#dadde6"></div>
<div class="t" style="left:1772px;top:453.2px;font-size:13.2px;color:#1f2636;-webkit-text-stroke:0.25px #1f2636;transform:scaleX(0.99);transform-origin:0 0">BACKLINKS</div>
<div class="t" style="left:1850.5px;top:448.5px;font-size:13px;font-weight:700;color:#52738f;font-style:italic">i</div>
<div class="t" style="left:1772px;top:483px;font-size:18px;font-weight:700;color:#151a24;letter-spacing:0px;transform:scaleX(1.06);transform-origin:0 0">292.7K</div>
<svg style="left:1842px;top:487px" width="7" height="7" viewBox="0 0 7 7"><path d="M3.5 0.3 L6.8 6.5 H0.2 Z" fill="#2a7d4a"/></svg>
<div class="t" style="left:1853px;top:483.5px;font-size:13px;color:#2a7d4a">711</div>
<div class="a" style="left:1763px;top:356px;width:123px;height:53px;border:4px solid #ee0000;border-radius:2px"></div>
<div class="a" style="left:1763px;top:470px;width:129px;height:43px;border:4px solid #ee0000;border-radius:2px"></div><div class="a" style="left:291px;top:558px;width:1736px;height:421px;background:#fff;border-radius:0 0 7px 7px;box-shadow:0 1px 4px rgba(40,50,80,0.06)"></div>
<div class="a" style="left:724px;top:558px;width:1303px;height:44px;background:#f8f8fb;border-bottom:1.5px solid #eef0f4"></div>
<div class="a" style="left:723px;top:558px;width:1.5px;height:43px;background:#dcdee6"></div>
<div class="a" style="left:1157px;top:564px;width:1.5px;height:30px;background:#dcdee6"></div>
<div class="a" style="left:1591px;top:564px;width:1.5px;height:30px;background:#dcdee6"></div>
<div class="t" style="left:314px;top:571.5px;font-size:14px;color:#2a7fd4;-webkit-text-stroke:0.2px #2a7fd4;transform:scaleX(0.8679);transform-origin:0 0">TOTALE HOEVEELHEID VERKEER</div>
<div class="t" style="left:748px;top:571.5px;font-size:14px;color:#2f3a5c;-webkit-text-stroke:0.2px #2f3a5c;transform:scaleX(0.9064);transform-origin:0 0">ZOEKWOORDEN</div>
<div class="t" style="left:1182px;top:571.5px;font-size:14px;color:#2f3a5c;-webkit-text-stroke:0.2px #2f3a5c;transform:scaleX(0.8630);transform-origin:0 0">KOSTEN VOOR HET VERKEER</div>
<div class="t" style="left:1616px;top:571.5px;font-size:14px;color:#2f3a5c;-webkit-text-stroke:0.2px #2f3a5c;transform:scaleX(0.8968);transform-origin:0 0">BACKLINKS</div>
<div class="t" style="left:314px;top:638.5px;font-size:13px;color:#4d5a69;-webkit-text-stroke:0.2px #4d5a69;letter-spacing:0px;transform:scaleX(0.975);transform-origin:0 0">6 MAANDEN</div>
<div class="t" style="left:412px;top:638.5px;font-size:13px;color:#4d5a69;-webkit-text-stroke:0.2px #4d5a69;letter-spacing:0px;transform:scaleX(0.975);transform-origin:0 0">12 MAANDEN</div>
<div class="t" style="left:515px;top:638.5px;font-size:13px;color:#4d5a69;-webkit-text-stroke:0.2px #4d5a69;letter-spacing:0px;transform:scaleX(0.975);transform-origin:0 0">18 MAANDEN</div>
<div class="t" style="left:619px;top:638.5px;font-size:13px;color:#4d5a69;-webkit-text-stroke:0.2px #4d5a69;letter-spacing:0px;transform:scaleX(0.975);transform-origin:0 0">24 MAANDEN</div>
<div class="t" style="left:724px;top:638.5px;font-size:13px;color:#4d5a69;-webkit-text-stroke:0.2px #4d5a69;letter-spacing:0px;transform:scaleX(0.975);transform-origin:0 0">30 MAANDEN</div>
<div class="t" style="left:830px;top:638.5px;font-size:13px;color:#4d5a69;-webkit-text-stroke:0.2px #4d5a69;letter-spacing:0px;transform:scaleX(0.975);transform-origin:0 0">36 MAANDEN</div>
<div class="t" style="left:935px;top:638.5px;font-size:13px;color:#373c6e;-webkit-text-stroke:0.2px #373c6e;transform:scaleX(0.95);transform-origin:0 0">ALLE</div>
<div class="a" style="left:935px;top:663px;width:31px;height:2px;background:#2a7fd4"></div>
<svg style="left:0;top:0" width="2048" height="1127" viewBox="0 0 2048 1127">
<path d="M365 704.5 H1998" stroke="#e6e6e6" stroke-width="1"/>
<path d="M365 767.5 H1998" stroke="#e6e6e6" stroke-width="1"/>
<path d="M365 827.5 H1998" stroke="#e6e6e6" stroke-width="1"/>
<path d="M365 889.5 H1998" stroke="#ccd6eb" stroke-width="1"/>
<text x="348.5" y="710.0" text-anchor="end" font-family="Liberation Sans" font-size="13.3" fill="#5f6d80" letter-spacing="0.6">600K</text>
<text x="348.5" y="771.5" text-anchor="end" font-family="Liberation Sans" font-size="13.3" fill="#5f6d80" letter-spacing="0.6">400K</text>
<text x="348.5" y="832.9" text-anchor="end" font-family="Liberation Sans" font-size="13.3" fill="#5f6d80" letter-spacing="0.6">200K</text>
<text x="348.5" y="894.4" text-anchor="end" font-family="Liberation Sans" font-size="13.3" fill="#5f6d80" letter-spacing="0.6">0</text>
<path d="M381.5 889 V899" stroke="#ccd6eb" stroke-width="1"/>
<text x="381.0" y="912" text-anchor="middle" font-family="Liberation Sans" font-size="13.3" fill="#5f6d80" transform="translate(381.0 0) scale(0.93 1) translate(-381.0 0)">Jan 2017</text>
<path d="M496.5 889 V899" stroke="#ccd6eb" stroke-width="1"/>
<text x="495.8" y="912" text-anchor="middle" font-family="Liberation Sans" font-size="13.3" fill="#5f6d80" transform="translate(495.8 0) scale(0.93 1) translate(-495.8 0)">Mei 2017</text>
<path d="M614.5 889 V899" stroke="#ccd6eb" stroke-width="1"/>
<text x="613.5" y="912" text-anchor="middle" font-family="Liberation Sans" font-size="13.3" fill="#5f6d80" transform="translate(613.5 0) scale(0.93 1) translate(-613.5 0)">Sep 2017</text>
<path d="M730.5 889 V899" stroke="#ccd6eb" stroke-width="1"/>
<text x="730.3" y="912" text-anchor="middle" font-family="Liberation Sans" font-size="13.3" fill="#5f6d80" transform="translate(730.3 0) scale(0.93 1) translate(-730.3 0)">Jan 2018</text>
<path d="M845.5 889 V899" stroke="#ccd6eb" stroke-width="1"/>
<text x="845.1" y="912" text-anchor="middle" font-family="Liberation Sans" font-size="13.3" fill="#5f6d80" transform="translate(845.1 0) scale(0.93 1) translate(-845.1 0)">Mei 2018</text>
<path d="M963.5 889 V899" stroke="#ccd6eb" stroke-width="1"/>
<text x="962.8" y="912" text-anchor="middle" font-family="Liberation Sans" font-size="13.3" fill="#5f6d80" transform="translate(962.8 0) scale(0.93 1) translate(-962.8 0)">Sep 2018</text>
<path d="M1080.5 889 V899" stroke="#ccd6eb" stroke-width="1"/>
<text x="1079.6" y="912" text-anchor="middle" font-family="Liberation Sans" font-size="13.3" fill="#5f6d80" transform="translate(1079.6 0) scale(0.93 1) translate(-1079.6 0)">Jan 2019</text>
<path d="M1194.5 889 V899" stroke="#ccd6eb" stroke-width="1"/>
<text x="1194.4" y="912" text-anchor="middle" font-family="Liberation Sans" font-size="13.3" fill="#5f6d80" transform="translate(1194.4 0) scale(0.93 1) translate(-1194.4 0)">Mei 2019</text>
<path d="M1312.5 889 V899" stroke="#ccd6eb" stroke-width="1"/>
<text x="1312.1" y="912" text-anchor="middle" font-family="Liberation Sans" font-size="13.3" fill="#5f6d80" transform="translate(1312.1 0) scale(0.93 1) translate(-1312.1 0)">Sep 2019</text>
<path d="M1429.5 889 V899" stroke="#ccd6eb" stroke-width="1"/>
<text x="1428.8" y="912" text-anchor="middle" font-family="Liberation Sans" font-size="13.3" fill="#5f6d80" transform="translate(1428.8 0) scale(0.93 1) translate(-1428.8 0)">Jan 2020</text>
<path d="M1545.5 889 V899" stroke="#ccd6eb" stroke-width="1"/>
<text x="1544.6" y="912" text-anchor="middle" font-family="Liberation Sans" font-size="13.3" fill="#5f6d80" transform="translate(1544.6 0) scale(0.93 1) translate(-1544.6 0)">Mei 2020</text>
<path d="M1662.5 889 V899" stroke="#ccd6eb" stroke-width="1"/>
<text x="1662.3" y="912" text-anchor="middle" font-family="Liberation Sans" font-size="13.3" fill="#5f6d80" transform="translate(1662.3 0) scale(0.93 1) translate(-1662.3 0)">Sep 2020</text>
<path d="M1779.5 889 V899" stroke="#ccd6eb" stroke-width="1"/>
<text x="1779.1" y="912" text-anchor="middle" font-family="Liberation Sans" font-size="13.3" fill="#5f6d80" transform="translate(1779.1 0) scale(0.93 1) translate(-1779.1 0)">Jan 2021</text>
<path d="M1894.5 889 V899" stroke="#ccd6eb" stroke-width="1"/>
<text x="1893.9" y="912" text-anchor="middle" font-family="Liberation Sans" font-size="13.3" fill="#5f6d80" transform="translate(1893.9 0) scale(0.93 1) translate(-1893.9 0)">Mei 2021</text>
<path d="M381.0 888.8 H1982.0" stroke="#4285f4" stroke-width="1.7" fill="none"/>
<path d="M381.00 825.00 C381.00 825.00 398.80 802.50 410.67 802.50 C421.38 802.50 426.74 818.26 437.46 827.90 C449.33 838.58 455.26 853.30 467.12 853.30 C478.61 853.30 484.35 851.91 495.83 848.00 C507.70 843.95 513.63 848.00 525.50 833.40 C536.98 818.80 542.72 771.60 554.21 771.60 C566.07 771.60 572.01 795.84 583.87 811.90 C595.74 827.96 601.67 851.90 613.54 851.90 C625.02 851.90 630.76 827.50 642.24 827.50 C654.11 827.50 660.04 859.50 671.91 859.50 C683.39 859.50 689.13 858.75 700.62 858.75 C712.48 858.75 718.42 861.10 730.28 861.10 C742.15 861.10 748.08 859.10 759.95 859.10 C770.67 859.10 776.02 861.60 786.74 861.60 C798.61 861.60 804.54 853.50 816.41 849.70 C827.89 846.02 833.63 847.27 845.12 842.90 C856.98 838.39 862.91 827.50 874.78 827.50 C886.26 827.50 892.01 831.80 903.49 831.80 C915.36 831.80 921.29 826.30 933.15 826.30 C945.02 826.30 950.95 836.60 962.82 837.60 C974.30 838.60 980.04 838.21 991.53 838.60 C1003.39 839.01 1009.33 838.60 1021.19 839.60 C1032.68 840.60 1038.42 850.70 1049.90 850.70 C1061.77 850.70 1067.70 850.70 1079.57 849.90 C1091.43 849.10 1097.37 844.80 1109.23 844.80 C1119.95 844.80 1125.31 856.00 1136.03 856.00 C1147.89 856.00 1153.82 842.10 1165.69 842.10 C1177.17 842.10 1182.92 848.80 1194.40 848.80 C1206.27 848.80 1212.20 841.50 1224.06 841.50 C1235.55 841.50 1241.29 844.64 1252.77 845.80 C1264.64 847.00 1270.57 847.40 1282.44 847.40 C1294.30 847.40 1300.24 842.10 1312.10 842.10 C1323.59 842.10 1329.33 845.24 1340.81 846.40 C1352.68 847.60 1358.61 848.00 1370.48 848.00 C1381.96 848.00 1387.70 843.47 1399.18 841.50 C1411.05 839.47 1416.98 839.16 1428.85 838.00 C1440.72 836.84 1446.65 835.70 1458.51 835.70 C1469.61 835.70 1475.17 850.70 1486.27 850.70 C1498.13 850.70 1504.06 842.50 1515.93 835.10 C1527.41 827.94 1533.16 814.30 1544.64 814.30 C1556.51 814.30 1562.44 836.40 1574.30 836.40 C1585.79 836.40 1591.53 820.90 1603.01 818.60 C1614.88 816.30 1620.81 816.30 1632.68 816.30 C1644.54 816.30 1650.48 823.17 1662.34 828.70 C1673.83 834.05 1679.57 843.50 1691.05 843.50 C1702.92 843.50 1708.85 830.80 1720.72 830.80 C1732.20 830.80 1737.94 839.70 1749.42 839.70 C1761.29 839.70 1767.22 839.70 1779.09 839.70 C1790.96 839.70 1796.89 842.68 1808.75 845.50 C1819.47 848.04 1824.83 852.10 1835.55 853.10 C1847.41 854.10 1853.35 854.10 1865.21 854.10 C1876.70 854.10 1882.44 821.90 1893.92 821.90 C1905.79 821.90 1911.72 856.90 1923.59 856.90 C1935.07 856.90 1940.81 847.99 1952.30 839.20 C1964.16 830.11 1981.96 812.20 1981.96 812.20" stroke="rgba(0,0,0,0.06)" stroke-width="5" fill="none" transform="translate(1 1)"/>
<path d="M381.00 825.00 C381.00 825.00 398.80 802.50 410.67 802.50 C421.38 802.50 426.74 818.26 437.46 827.90 C449.33 838.58 455.26 853.30 467.12 853.30 C478.61 853.30 484.35 851.91 495.83 848.00 C507.70 843.95 513.63 848.00 525.50 833.40 C536.98 818.80 542.72 771.60 554.21 771.60 C566.07 771.60 572.01 795.84 583.87 811.90 C595.74 827.96 601.67 851.90 613.54 851.90 C625.02 851.90 630.76 827.50 642.24 827.50 C654.11 827.50 660.04 859.50 671.91 859.50 C683.39 859.50 689.13 858.75 700.62 858.75 C712.48 858.75 718.42 861.10 730.28 861.10 C742.15 861.10 748.08 859.10 759.95 859.10 C770.67 859.10 776.02 861.60 786.74 861.60 C798.61 861.60 804.54 853.50 816.41 849.70 C827.89 846.02 833.63 847.27 845.12 842.90 C856.98 838.39 862.91 827.50 874.78 827.50 C886.26 827.50 892.01 831.80 903.49 831.80 C915.36 831.80 921.29 826.30 933.15 826.30 C945.02 826.30 950.95 836.60 962.82 837.60 C974.30 838.60 980.04 838.21 991.53 838.60 C1003.39 839.01 1009.33 838.60 1021.19 839.60 C1032.68 840.60 1038.42 850.70 1049.90 850.70 C1061.77 850.70 1067.70 850.70 1079.57 849.90 C1091.43 849.10 1097.37 844.80 1109.23 844.80 C1119.95 844.80 1125.31 856.00 1136.03 856.00 C1147.89 856.00 1153.82 842.10 1165.69 842.10 C1177.17 842.10 1182.92 848.80 1194.40 848.80 C1206.27 848.80 1212.20 841.50 1224.06 841.50 C1235.55 841.50 1241.29 844.64 1252.77 845.80 C1264.64 847.00 1270.57 847.40 1282.44 847.40 C1294.30 847.40 1300.24 842.10 1312.10 842.10 C1323.59 842.10 1329.33 845.24 1340.81 846.40 C1352.68 847.60 1358.61 848.00 1370.48 848.00 C1381.96 848.00 1387.70 843.47 1399.18 841.50 C1411.05 839.47 1416.98 839.16 1428.85 838.00 C1440.72 836.84 1446.65 835.70 1458.51 835.70 C1469.61 835.70 1475.17 850.70 1486.27 850.70 C1498.13 850.70 1504.06 842.50 1515.93 835.10 C1527.41 827.94 1533.16 814.30 1544.64 814.30 C1556.51 814.30 1562.44 836.40 1574.30 836.40 C1585.79 836.40 1591.53 820.90 1603.01 818.60 C1614.88 816.30 1620.81 816.30 1632.68 816.30 C1644.54 816.30 1650.48 823.17 1662.34 828.70 C1673.83 834.05 1679.57 843.50 1691.05 843.50 C1702.92 843.50 1708.85 830.80 1720.72 830.80 C1732.20 830.80 1737.94 839.70 1749.42 839.70 C1761.29 839.70 1767.22 839.70 1779.09 839.70 C1790.96 839.70 1796.89 842.68 1808.75 845.50 C1819.47 848.04 1824.83 852.10 1835.55 853.10 C1847.41 854.10 1853.35 854.10 1865.21 854.10 C1876.70 854.10 1882.44 821.90 1893.92 821.90 C1905.79 821.90 1911.72 856.90 1923.59 856.90 C1935.07 856.90 1940.81 847.99 1952.30 839.20 C1964.16 830.11 1981.96 812.20 1981.96 812.20" stroke="rgba(0,0,0,0.08)" stroke-width="3" fill="none" transform="translate(1 1)"/>
<path d="M381.00 825.00 C381.00 825.00 398.80 802.50 410.67 802.50 C421.38 802.50 426.74 818.26 437.46 827.90 C449.33 838.58 455.26 853.30 467.12 853.30 C478.61 853.30 484.35 851.91 495.83 848.00 C507.70 843.95 513.63 848.00 525.50 833.40 C536.98 818.80 542.72 771.60 554.21 771.60 C566.07 771.60 572.01 795.84 583.87 811.90 C595.74 827.96 601.67 851.90 613.54 851.90 C625.02 851.90 630.76 827.50 642.24 827.50 C654.11 827.50 660.04 859.50 671.91 859.50 C683.39 859.50 689.13 858.75 700.62 858.75 C712.48 858.75 718.42 861.10 730.28 861.10 C742.15 861.10 748.08 859.10 759.95 859.10 C770.67 859.10 776.02 861.60 786.74 861.60 C798.61 861.60 804.54 853.50 816.41 849.70 C827.89 846.02 833.63 847.27 845.12 842.90 C856.98 838.39 862.91 827.50 874.78 827.50 C886.26 827.50 892.01 831.80 903.49 831.80 C915.36 831.80 921.29 826.30 933.15 826.30 C945.02 826.30 950.95 836.60 962.82 837.60 C974.30 838.60 980.04 838.21 991.53 838.60 C1003.39 839.01 1009.33 838.60 1021.19 839.60 C1032.68 840.60 1038.42 850.70 1049.90 850.70 C1061.77 850.70 1067.70 850.70 1079.57 849.90 C1091.43 849.10 1097.37 844.80 1109.23 844.80 C1119.95 844.80 1125.31 856.00 1136.03 856.00 C1147.89 856.00 1153.82 842.10 1165.69 842.10 C1177.17 842.10 1182.92 848.80 1194.40 848.80 C1206.27 848.80 1212.20 841.50 1224.06 841.50 C1235.55 841.50 1241.29 844.64 1252.77 845.80 C1264.64 847.00 1270.57 847.40 1282.44 847.40 C1294.30 847.40 1300.24 842.10 1312.10 842.10 C1323.59 842.10 1329.33 845.24 1340.81 846.40 C1352.68 847.60 1358.61 848.00 1370.48 848.00 C1381.96 848.00 1387.70 843.47 1399.18 841.50 C1411.05 839.47 1416.98 839.16 1428.85 838.00 C1440.72 836.84 1446.65 835.70 1458.51 835.70 C1469.61 835.70 1475.17 850.70 1486.27 850.70 C1498.13 850.70 1504.06 842.50 1515.93 835.10 C1527.41 827.94 1533.16 814.30 1544.64 814.30 C1556.51 814.30 1562.44 836.40 1574.30 836.40 C1585.79 836.40 1591.53 820.90 1603.01 818.60 C1614.88 816.30 1620.81 816.30 1632.68 816.30 C1644.54 816.30 1650.48 823.17 1662.34 828.70 C1673.83 834.05 1679.57 843.50 1691.05 843.50 C1702.92 843.50 1708.85 830.80 1720.72 830.80 C1732.20 830.80 1737.94 839.70 1749.42 839.70 C1761.29 839.70 1767.22 839.70 1779.09 839.70 C1790.96 839.70 1796.89 842.68 1808.75 845.50 C1819.47 848.04 1824.83 852.10 1835.55 853.10 C1847.41 854.10 1853.35 854.10 1865.21 854.10 C1876.70 854.10 1882.44 821.90 1893.92 821.90 C1905.79 821.90 1911.72 856.90 1923.59 856.90 C1935.07 856.90 1940.81 847.99 1952.30 839.20 C1964.16 830.11 1981.96 812.20 1981.96 812.20" stroke="#33b07a" stroke-width="2.6" fill="none" stroke-linejoin="round"/>
<circle cx="381.00" cy="888.8" r="4.3" fill="#4285f4" stroke="#fff" stroke-width="1"/>
<circle cx="410.67" cy="888.8" r="4.3" fill="#4285f4" stroke="#fff" stroke-width="1"/>
<circle cx="437.46" cy="888.8" r="4.3" fill="#4285f4" stroke="#fff" stroke-width="1"/>
<circle cx="467.12" cy="888.8" r="4.3" fill="#4285f4" stroke="#fff" stroke-width="1"/>
<circle cx="495.83" cy="888.8" r="4.3" fill="#4285f4" stroke="#fff" stroke-width="1"/>
<circle cx="525.50" cy="888.8" r="4.3" fill="#4285f4" stroke="#fff" stroke-width="1"/>
<circle cx="554.21" cy="888.8" r="4.3" fill="#4285f4" stroke="#fff" stroke-width="1"/>
<circle cx="583.87" cy="888.8" r="4.3" fill="#4285f4" stroke="#fff" stroke-width="1"/>
<circle cx="613.54" cy="888.8" r="4.3" fill="#4285f4" stroke="#fff" stroke-width="1"/>
<circle cx="642.24" cy="888.8" r="4.3" fill="#4285f4" stroke="#fff" stroke-width="1"/>
<circle cx="671.91" cy="888.8" r="4.3" fill="#4285f4" stroke="#fff" stroke-width="1"/>
<circle cx="700.62" cy="888.8" r="4.3" fill="#4285f4" stroke="#fff" stroke-width="1"/>
<circle cx="730.28" cy="888.8" r="4.3" fill="#4285f4" stroke="#fff" stroke-width="1"/>
<circle cx="759.95" cy="888.8" r="4.3" fill="#4285f4" stroke="#fff" stroke-width="1"/>
<circle cx="786.74" cy="888.8" r="4.3" fill="#4285f4" stroke="#fff" stroke-width="1"/>
<circle cx="816.41" cy="888.8" r="4.3" fill="#4285f4" stroke="#fff" stroke-width="1"/>
<circle cx="845.12" cy="888.8" r="4.3" fill="#4285f4" stroke="#fff" stroke-width="1"/>
<circle cx="874.78" cy="888.8" r="4.3" fill="#4285f4" stroke="#fff" stroke-width="1"/>
<circle cx="903.49" cy="888.8" r="4.3" fill="#4285f4" stroke="#fff" stroke-width="1"/>
<circle cx="933.15" cy="888.8" r="4.3" fill="#4285f4" stroke="#fff" stroke-width="1"/>
<circle cx="962.82" cy="888.8" r="4.3" fill="#4285f4" stroke="#fff" stroke-width="1"/>
<circle cx="991.53" cy="888.8" r="4.3" fill="#4285f4" stroke="#fff" stroke-width="1"/>
<circle cx="1021.19" cy="888.8" r="4.3" fill="#4285f4" stroke="#fff" stroke-width="1"/>
<circle cx="1049.90" cy="888.8" r="4.3" fill="#4285f4" stroke="#fff" stroke-width="1"/>
<circle cx="1079.57" cy="888.8" r="4.3" fill="#4285f4" stroke="#fff" stroke-width="1"/>
<circle cx="1109.23" cy="888.8" r="4.3" fill="#4285f4" stroke="#fff" stroke-width="1"/>
<circle cx="1136.03" cy="888.8" r="4.3" fill="#4285f4" stroke="#fff" stroke-width="1"/>
<circle cx="1165.69" cy="888.8" r="4.3" fill="#4285f4" stroke="#fff" stroke-width="1"/>
<circle cx="1194.40" cy="888.8" r="4.3" fill="#4285f4" stroke="#fff" stroke-width="1"/>
<circle cx="1224.06" cy="888.8" r="4.3" fill="#4285f4" stroke="#fff" stroke-width="1"/>
<circle cx="1252.77" cy="888.8" r="4.3" fill="#4285f4" stroke="#fff" stroke-width="1"/>
<circle cx="1282.44" cy="888.8" r="4.3" fill="#4285f4" stroke="#fff" stroke-width="1"/>
<circle cx="1312.10" cy="888.8" r="4.3" fill="#4285f4" stroke="#fff" stroke-width="1"/>
<circle cx="1340.81" cy="888.8" r="4.3" fill="#4285f4" stroke="#fff" stroke-width="1"/>
<circle cx="1370.48" cy="888.8" r="4.3" fill="#4285f4" stroke="#fff" stroke-width="1"/>
<circle cx="1399.18" cy="888.8" r="4.3" fill="#4285f4" stroke="#fff" stroke-width="1"/>
<circle cx="1428.85" cy="888.8" r="4.3" fill="#4285f4" stroke="#fff" stroke-width="1"/>
<circle cx="1458.51" cy="888.8" r="4.3" fill="#4285f4" stroke="#fff" stroke-width="1"/>
<circle cx="1486.27" cy="888.8" r="4.3" fill="#4285f4" stroke="#fff" stroke-width="1"/>
<circle cx="1515.93" cy="888.8" r="4.3" fill="#4285f4" stroke="#fff" stroke-width="1"/>
<circle cx="1544.64" cy="888.8" r="4.3" fill="#4285f4" stroke="#fff" stroke-width="1"/>
<circle cx="1574.30" cy="888.8" r="4.3" fill="#4285f4" stroke="#fff" stroke-width="1"/>
<circle cx="1603.01" cy="888.8" r="4.3" fill="#4285f4" stroke="#fff" stroke-width="1"/>
<circle cx="1632.68" cy="888.8" r="4.3" fill="#4285f4" stroke="#fff" stroke-width="1"/>
<circle cx="1662.34" cy="888.8" r="4.3" fill="#4285f4" stroke="#fff" stroke-width="1"/>
<circle cx="1691.05" cy="888.8" r="4.3" fill="#4285f4" stroke="#fff" stroke-width="1"/>
<circle cx="1720.72" cy="888.8" r="4.3" fill="#4285f4" stroke="#fff" stroke-width="1"/>
<circle cx="1749.42" cy="888.8" r="4.3" fill="#4285f4" stroke="#fff" stroke-width="1"/>
<circle cx="1779.09" cy="888.8" r="4.3" fill="#4285f4" stroke="#fff" stroke-width="1"/>
<circle cx="1808.75" cy="888.8" r="4.3" fill="#4285f4" stroke="#fff" stroke-width="1"/>
<circle cx="1835.55" cy="888.8" r="4.3" fill="#4285f4" stroke="#fff" stroke-width="1"/>
<circle cx="1865.21" cy="888.8" r="4.3" fill="#4285f4" stroke="#fff" stroke-width="1"/>
<circle cx="1893.92" cy="888.8" r="4.3" fill="#4285f4" stroke="#fff" stroke-width="1"/>
<circle cx="1923.59" cy="888.8" r="4.3" fill="#4285f4" stroke="#fff" stroke-width="1"/>
<circle cx="1952.30" cy="888.8" r="4.3" fill="#4285f4" stroke="#fff" stroke-width="1"/>
<circle cx="1981.96" cy="888.8" r="4.3" fill="#4285f4" stroke="#fff" stroke-width="1"/>
<circle cx="381.00" cy="825.00" r="4.6" fill="#33b07a" stroke="#fff" stroke-width="1"/>
<circle cx="410.67" cy="802.50" r="4.6" fill="#33b07a" stroke="#fff" stroke-width="1"/>
<circle cx="437.46" cy="827.90" r="4.6" fill="#33b07a" stroke="#fff" stroke-width="1"/>
<circle cx="467.12" cy="853.30" r="4.6" fill="#33b07a" stroke="#fff" stroke-width="1"/>
<circle cx="495.83" cy="848.00" r="4.6" fill="#33b07a" stroke="#fff" stroke-width="1"/>
<circle cx="525.50" cy="833.40" r="4.6" fill="#33b07a" stroke="#fff" stroke-width="1"/>
<circle cx="554.21" cy="771.60" r="4.6" fill="#33b07a" stroke="#fff" stroke-width="1"/>
<circle cx="583.87" cy="811.90" r="4.6" fill="#33b07a" stroke="#fff" stroke-width="1"/>
<circle cx="613.54" cy="851.90" r="4.6" fill="#33b07a" stroke="#fff" stroke-width="1"/>
<circle cx="642.24" cy="827.50" r="4.6" fill="#33b07a" stroke="#fff" stroke-width="1"/>
<circle cx="671.91" cy="859.50" r="4.6" fill="#33b07a" stroke="#fff" stroke-width="1"/>
<circle cx="700.62" cy="858.75" r="4.6" fill="#33b07a" stroke="#fff" stroke-width="1"/>
<circle cx="730.28" cy="861.10" r="4.6" fill="#33b07a" stroke="#fff" stroke-width="1"/>
<circle cx="759.95" cy="859.10" r="4.6" fill="#33b07a" stroke="#fff" stroke-width="1"/>
<circle cx="786.74" cy="861.60" r="4.6" fill="#33b07a" stroke="#fff" stroke-width="1"/>
<circle cx="816.41" cy="849.70" r="4.6" fill="#33b07a" stroke="#fff" stroke-width="1"/>
<circle cx="845.12" cy="842.90" r="4.6" fill="#33b07a" stroke="#fff" stroke-width="1"/>
<circle cx="874.78" cy="827.50" r="4.6" fill="#33b07a" stroke="#fff" stroke-width="1"/>
<circle cx="903.49" cy="831.80" r="4.6" fill="#33b07a" stroke="#fff" stroke-width="1"/>
<circle cx="933.15" cy="826.30" r="4.6" fill="#33b07a" stroke="#fff" stroke-width="1"/>
<circle cx="962.82" cy="837.60" r="4.6" fill="#33b07a" stroke="#fff" stroke-width="1"/>
<circle cx="991.53" cy="838.60" r="4.6" fill="#33b07a" stroke="#fff" stroke-width="1"/>
<circle cx="1021.19" cy="839.60" r="4.6" fill="#33b07a" stroke="#fff" stroke-width="1"/>
<circle cx="1049.90" cy="850.70" r="4.6" fill="#33b07a" stroke="#fff" stroke-width="1"/>
<circle cx="1079.57" cy="849.90" r="4.6" fill="#33b07a" stroke="#fff" stroke-width="1"/>
<circle cx="1109.23" cy="844.80" r="4.6" fill="#33b07a" stroke="#fff" stroke-width="1"/>
<circle cx="1136.03" cy="856.00" r="4.6" fill="#33b07a" stroke="#fff" stroke-width="1"/>
<circle cx="1165.69" cy="842.10" r="4.6" fill="#33b07a" stroke="#fff" stroke-width="1"/>
<circle cx="1194.40" cy="848.80" r="4.6" fill="#33b07a" stroke="#fff" stroke-width="1"/>
<circle cx="1224.06" cy="841.50" r="4.6" fill="#33b07a" stroke="#fff" stroke-width="1"/>
<circle cx="1252.77" cy="845.80" r="4.6" fill="#33b07a" stroke="#fff" stroke-width="1"/>
<circle cx="1282.44" cy="847.40" r="4.6" fill="#33b07a" stroke="#fff" stroke-width="1"/>
<circle cx="1312.10" cy="842.10" r="4.6" fill="#33b07a" stroke="#fff" stroke-width="1"/>
<circle cx="1340.81" cy="846.40" r="4.6" fill="#33b07a" stroke="#fff" stroke-width="1"/>
<circle cx="1370.48" cy="848.00" r="4.6" fill="#33b07a" stroke="#fff" stroke-width="1"/>
<circle cx="1399.18" cy="841.50" r="4.6" fill="#33b07a" stroke="#fff" stroke-width="1"/>
<circle cx="1428.85" cy="838.00" r="4.6" fill="#33b07a" stroke="#fff" stroke-width="1"/>
<circle cx="1458.51" cy="835.70" r="4.6" fill="#33b07a" stroke="#fff" stroke-width="1"/>
<circle cx="1486.27" cy="850.70" r="4.6" fill="#33b07a" stroke="#fff" stroke-width="1"/>
<circle cx="1515.93" cy="835.10" r="4.6" fill="#33b07a" stroke="#fff" stroke-width="1"/>
<circle cx="1544.64" cy="814.30" r="4.6" fill="#33b07a" stroke="#fff" stroke-width="1"/>
<circle cx="1574.30" cy="836.40" r="4.6" fill="#33b07a" stroke="#fff" stroke-width="1"/>
<circle cx="1603.01" cy="818.60" r="4.6" fill="#33b07a" stroke="#fff" stroke-width="1"/>
<circle cx="1632.68" cy="816.30" r="4.6" fill="#33b07a" stroke="#fff" stroke-width="1"/>
<circle cx="1662.34" cy="828.70" r="4.6" fill="#33b07a" stroke="#fff" stroke-width="1"/>
<circle cx="1691.05" cy="843.50" r="4.6" fill="#33b07a" stroke="#fff" stroke-width="1"/>
<circle cx="1720.72" cy="830.80" r="4.6" fill="#33b07a" stroke="#fff" stroke-width="1"/>
<circle cx="1749.42" cy="839.70" r="4.6" fill="#33b07a" stroke="#fff" stroke-width="1"/>
<circle cx="1779.09" cy="839.70" r="4.6" fill="#33b07a" stroke="#fff" stroke-width="1"/>
<circle cx="1808.75" cy="845.50" r="4.6" fill="#33b07a" stroke="#fff" stroke-width="1"/>
<circle cx="1835.55" cy="853.10" r="4.6" fill="#33b07a" stroke="#fff" stroke-width="1"/>
<circle cx="1865.21" cy="854.10" r="4.6" fill="#33b07a" stroke="#fff" stroke-width="1"/>
<circle cx="1893.92" cy="821.90" r="4.6" fill="#33b07a" stroke="#fff" stroke-width="1"/>
<circle cx="1923.59" cy="856.90" r="4.6" fill="#33b07a" stroke="#fff" stroke-width="1"/>
<circle cx="1952.30" cy="839.20" r="4.6" fill="#33b07a" stroke="#fff" stroke-width="1"/>
<circle cx="1981.96" cy="812.20" r="4.6" fill="#33b07a" stroke="#fff" stroke-width="1"/>
<path d="M1603.5 704.5 V889" stroke="#2b3064" stroke-width="1.4"/>
<text x="0" y="0" transform="translate(1596.0 852.5) rotate(-90)" font-family="Liberation Sans" font-size="13.6" fill="#222">Database update</text>
</svg>
<div class="a" style="left:335px;top:943.5px;width:7px;height:7px;border-radius:50%;background:#33b07a"></div>
<div class="t" style="left:347px;top:939px;font-size:16px;color:#2b3350">Organisch</div>
<div class="a" style="left:444px;top:943.5px;width:7px;height:7px;border-radius:50%;background:#4285f4"></div>
<div class="t" style="left:457px;top:939px;font-size:16px;color:#2b3350">Betaald</div>
<div class="a" style="left:1975px;top:933px;width:34px;height:29px;border:2px solid #d5d8e3;border-radius:5px;background:#fff"></div>
<svg style="left:1987px;top:941px" width="11" height="13" viewBox="0 0 11 13"><path d="M5.5 0.2 L10.2 5 H7.5 V9.4 H3.5 V5 H0.8 Z" fill="#283466"/><rect x="0" y="11" width="10" height="1.6" rx="0.6" fill="#283466"/></svg><div class="a" style="left:291px;top:1013px;width:786px;height:2px;background:#d6d9e3"></div>
<div class="a" style="left:1240px;top:1013px;width:786px;height:2px;background:#d6d9e3"></div>
<div class="t" style="left:1089px;top:1006.3px;font-size:13.3px;font-weight:700;color:#3c4a57;transform:scaleX(0.945);transform-origin:0 0">ORGANISCH VERKEER</div>
<div class="a" style="left:291px;top:1048px;width:856px;height:100px;background:#f8f8fb;border-radius:7px;box-shadow:0 1px 4px rgba(40,50,80,0.05)"></div>
<div class="a" style="left:1170px;top:1048px;width:856px;height:100px;background:#f8f8fb;border-radius:7px;box-shadow:0 1px 4px rgba(40,50,80,0.05)"></div>
<div class="t" style="left:314px;top:1082.5px;font-size:23.1px;color:#1c2130">Organische zoekwoorden</div>
<div class="t" style="left:584px;top:1079px;font-size:14px;font-weight:700;color:#52738f;font-style:italic">i</div>
<div class="t" style="left:1193px;top:1082px;font-size:23.2px;color:#1c2130">Distributie van organische zoekwoord rankings</div>
<div class="t" style="left:1682px;top:1079px;font-size:14px;font-weight:700;color:#52738f;font-style:italic">i</div></body></html>
